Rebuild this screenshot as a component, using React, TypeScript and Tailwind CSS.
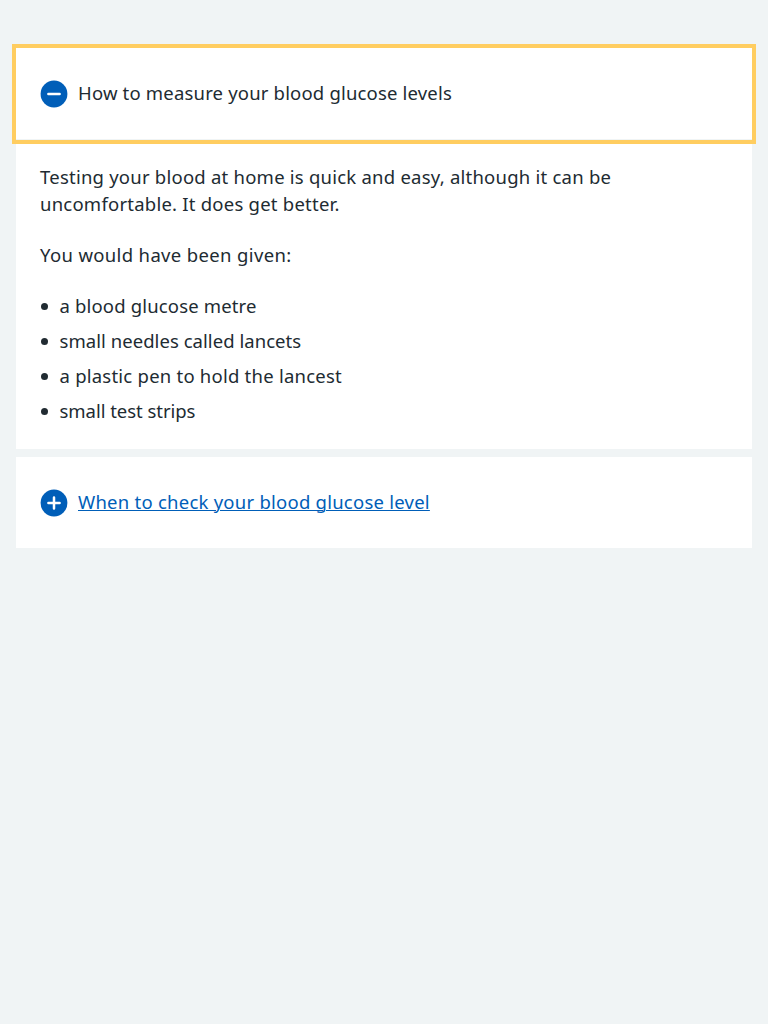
function Icon({ open }: { open: boolean }) {
  return (
    <svg className="-mx-px h-7 w-[30px] shrink-0" viewBox="0 0 30 28" fill="none" aria-hidden="true">
      <circle cx="15" cy="14" r="13.4" fill="#005eb8" />
      <path
        d={open ? "M9.4 14H20.6" : "M9.4 14H20.6M15 8.4V19.6"}
        stroke="#fff"
        strokeWidth="2.5"
        strokeLinecap="round"
      />
    </svg>
  );
}

const supplies = [
  { text: "a blood glucose metre", tracking: "tracking-[0.16px]" },
  { text: "small needles called lancets", tracking: "tracking-[0.05px]" },
  { text: "a plastic pen to hold the lancest", tracking: "tracking-[0.23px]" },
  { text: "small test strips", tracking: "tracking-[-0.04px]" },
];

export default function App() {
  return (
    <main className="min-h-screen bg-[#f0f4f5] px-4 pt-12 font-['Noto_Sans',sans-serif] text-[18.5px] leading-[27px] text-[#212b32]">
      <section className="h-[401px] bg-white">
        <button className="flex h-[92px] w-full items-center gap-2.5 border-b border-[#f0f4f5] px-6 text-left outline-4 outline-[#ffcd60]">
          <Icon open />
          <span className="pb-0.5 tracking-[0.18px]">How to measure your blood glucose levels</span>
        </button>
        <div className="px-6 pt-[23px]">
          <p className="mb-6 tracking-[0.23px]">
            Testing your blood at home is quick and easy, although it can be
            <br />
            uncomfortable. It does get better.
          </p>
          <p className="mb-6 tracking-[0.35px]">You would have been given:</p>
          <ul className="flex flex-col gap-2">
            {supplies.map(({ text, tracking }) => (
              <li key={text} className="flex items-center">
                <span className="mt-0.5 mr-3 ml-[0.5px] size-[7px] rounded-full bg-[#212b32]" />
                <span className={tracking}>{text}</span>
              </li>
            ))}
          </ul>
        </div>
      </section>
      <section className="mt-2 bg-white">
        <button className="flex h-[91px] w-full items-center gap-2.5 px-6 text-left text-[#005eb8]">
          <Icon open={false} />
          <span className="pb-0.5 tracking-[0.24px] underline decoration-1 underline-offset-1">
            When to check your blood glucose level
          </span>
        </button>
      </section>
    </main>
  );
}
